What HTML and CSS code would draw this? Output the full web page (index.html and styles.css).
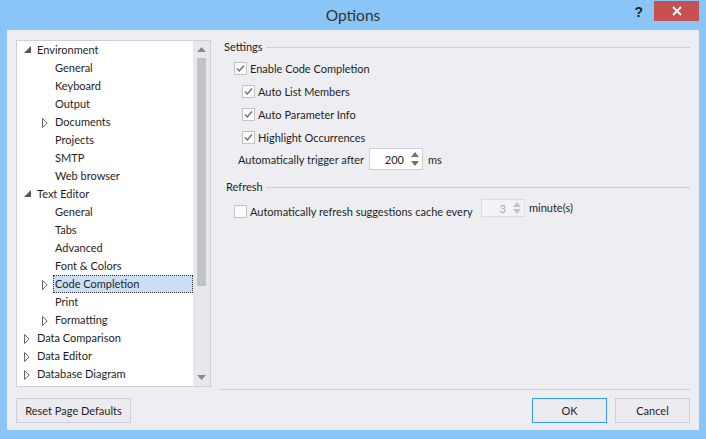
FILE: index.html
```html
<!DOCTYPE html>
<html>
<head>
<meta charset="utf-8">
<title>Options</title>
<link rel="stylesheet" href="styles.css">
</head>
<body>
<div class="window">
  <div class="titlebar">
    <div class="title">Options</div>
    <div class="caption-buttons">
      <div class="help">?</div>
      <div class="close">
        <svg width="10" height="10" viewBox="0 0 10 10"><path d="M1 1 L9 9 M9 1 L1 9" stroke="#fff" stroke-width="1.8" fill="none"/></svg>
      </div>
    </div>
  </div>
  <div class="client">
    <div class="main">
      <div class="tree">
        <ul class="items">
          <li class="row l0"><span class="tg"><svg class="exp" width="7" height="7" viewBox="0 0 7 7"><polygon points="7,0 7,7 0,7" fill="#595959"/></svg></span><span class="lbl">Environment</span></li>
          <li class="row l1"><span class="tg"></span><span class="lbl">General</span></li>
          <li class="row l1"><span class="tg"></span><span class="lbl">Keyboard</span></li>
          <li class="row l1"><span class="tg"></span><span class="lbl">Output</span></li>
          <li class="row l1"><span class="tg"><svg class="col" width="6" height="10" viewBox="0 0 6 10"><polygon points="0.5,0.5 5.2,5 0.5,9.5" fill="#fff" stroke="#666" stroke-width="1"/></svg></span><span class="lbl">Documents</span></li>
          <li class="row l1"><span class="tg"></span><span class="lbl">Projects</span></li>
          <li class="row l1"><span class="tg"></span><span class="lbl">SMTP</span></li>
          <li class="row l1"><span class="tg"></span><span class="lbl">Web browser</span></li>
          <li class="row l0"><span class="tg"><svg class="exp" width="7" height="7" viewBox="0 0 7 7"><polygon points="7,0 7,7 0,7" fill="#595959"/></svg></span><span class="lbl">Text Editor</span></li>
          <li class="row l1"><span class="tg"></span><span class="lbl">General</span></li>
          <li class="row l1"><span class="tg"></span><span class="lbl">Tabs</span></li>
          <li class="row l1"><span class="tg"></span><span class="lbl">Advanced</span></li>
          <li class="row l1"><span class="tg"></span><span class="lbl">Font &amp; Colors</span></li>
          <li class="row l1"><span class="tg"><svg class="col" width="6" height="10" viewBox="0 0 6 10"><polygon points="0.5,0.5 5.2,5 0.5,9.5" fill="#fff" stroke="#666" stroke-width="1"/></svg></span><span class="lbl sel">Code Completion</span></li>
          <li class="row l1"><span class="tg"></span><span class="lbl">Print</span></li>
          <li class="row l1"><span class="tg"><svg class="col" width="6" height="10" viewBox="0 0 6 10"><polygon points="0.5,0.5 5.2,5 0.5,9.5" fill="#fff" stroke="#666" stroke-width="1"/></svg></span><span class="lbl">Formatting</span></li>
          <li class="row l0"><span class="tg"><svg class="col" width="6" height="10" viewBox="0 0 6 10"><polygon points="0.5,0.5 5.2,5 0.5,9.5" fill="#fff" stroke="#666" stroke-width="1"/></svg></span><span class="lbl">Data Comparison</span></li>
          <li class="row l0"><span class="tg"><svg class="col" width="6" height="10" viewBox="0 0 6 10"><polygon points="0.5,0.5 5.2,5 0.5,9.5" fill="#fff" stroke="#666" stroke-width="1"/></svg></span><span class="lbl">Data Editor</span></li>
          <li class="row l0"><span class="tg"><svg class="col" width="6" height="10" viewBox="0 0 6 10"><polygon points="0.5,0.5 5.2,5 0.5,9.5" fill="#fff" stroke="#666" stroke-width="1"/></svg></span><span class="lbl">Database Diagram</span></li>
          <li class="row l0"><span class="tg"><svg class="col" width="6" height="10" viewBox="0 0 6 10"><polygon points="0.5,0.5 5.2,5 0.5,9.5" fill="#fff" stroke="#666" stroke-width="1"/></svg></span><span class="lbl">Debugger</span></li>
        </ul>
        <div class="scrollbar">
          <div class="sb-btn"><svg width="9" height="5" viewBox="0 0 9 5"><polygon points="4.5,0 9,5 0,5" fill="#868999"/></svg></div>
          <div class="sb-track"><div class="thumb"></div></div>
          <div class="sb-btn"><svg width="9" height="5" viewBox="0 0 9 5"><polygon points="0,0 9,0 4.5,5" fill="#868999"/></svg></div>
        </div>
      </div>
      <div class="panel">
        <div class="group-head"><span class="gh-label">Settings</span><span class="gh-rule"></span></div>
        <div class="opt l1 first">
          <span class="cb"><svg width="11" height="11" viewBox="0 0 11 11"><path d="M2 5.5 L4.3 8 L9 2.5" stroke="#707070" stroke-width="1.4" fill="none"/></svg></span><span class="txt">Enable Code Completion</span>
        </div>
        <div class="opt l2">
          <span class="cb"><svg width="11" height="11" viewBox="0 0 11 11"><path d="M2 5.5 L4.3 8 L9 2.5" stroke="#707070" stroke-width="1.4" fill="none"/></svg></span><span class="txt">Auto List Members</span>
        </div>
        <div class="opt l2">
          <span class="cb"><svg width="11" height="11" viewBox="0 0 11 11"><path d="M2 5.5 L4.3 8 L9 2.5" stroke="#707070" stroke-width="1.4" fill="none"/></svg></span><span class="txt">Auto Parameter Info</span>
        </div>
        <div class="opt l2">
          <span class="cb"><svg width="11" height="11" viewBox="0 0 11 11"><path d="M2 5.5 L4.3 8 L9 2.5" stroke="#707070" stroke-width="1.4" fill="none"/></svg></span><span class="txt">Highlight Occurrences</span>
        </div>
        <div class="trigger">
          <span class="trigger-label">Automatically trigger after</span>
          <div class="spin">
            <span class="spin-val">200</span>
            <span class="spin-arrows">
              <svg width="8" height="5" viewBox="0 0 8 5"><polygon points="4,0 8,5 0,5" fill="#717171"/></svg>
              <svg width="8" height="5" viewBox="0 0 8 5"><polygon points="0,0 8,0 4,5" fill="#717171"/></svg>
            </span>
          </div>
          <span class="unit">ms</span>
        </div>
        <div class="group-head refresh-head"><span class="gh-label">Refresh</span><span class="gh-rule"></span></div>
        <div class="opt l1 refresh-row">
          <span class="cb"></span><span class="txt refresh-label">Automatically refresh suggestions cache every</span>
          <div class="spin disabled">
            <span class="spin-val">3</span>
            <span class="spin-arrows">
              <svg width="8" height="5" viewBox="0 0 8 5"><polygon points="4,0 8,5 0,5" fill="#c4c4c8"/></svg>
              <svg width="8" height="5" viewBox="0 0 8 5"><polygon points="0,0 8,0 4,5" fill="#c4c4c8"/></svg>
            </span>
          </div>
          <span class="unit minutes">minute(s)</span>
        </div>
      </div>
    </div>
    <div class="buttons">
      <div class="btn reset">Reset Page Defaults</div>
      <div class="btn ok">OK</div>
      <div class="btn cancel">Cancel</div>
    </div>
  </div>
</div>
</body>
</html>
```
FILE: styles.css
```css
* { box-sizing: border-box; }
html, body { margin: 0; padding: 0; }
body {
  width: 706px;
  height: 439px;
  overflow: hidden;
  background: #89c5f7;
  font-family: Lato, "Noto Sans", sans-serif;
  font-size: 11px;
  color: #1e1e1e;
}
.window {
  width: 706px;
  height: 439px;
  display: flex;
  flex-direction: column;
}
.titlebar {
  height: 30px;
  display: grid;
  grid-template-columns: 1fr auto 1fr;
}
.title {
  grid-column: 2;
  font-family: Lato, "Noto Sans", sans-serif;
  font-size: 15.5px;
  line-height: 30px;
  color: #333;
}
.caption-buttons {
  grid-column: 3;
  display: flex;
  justify-content: flex-end;
  align-items: flex-start;
  padding-right: 7px;
}
.help {
  font-family: "Liberation Sans", sans-serif;
  font-weight: bold;
  font-size: 14px;
  line-height: 14px;
  margin-top: 5px;
  margin-right: 11px;
  color: #222;
}
.close {
  width: 45px;
  height: 20px;
  margin-top: 1px;
  background: #c75050;
  display: flex;
  align-items: center;
  justify-content: center;
}
.client {
  margin: 0 7px;
  height: 400px;
  background: #eeeef2;
  padding: 10px 9px 0;
  display: flex;
  flex-direction: column;
}
.main {
  display: flex;
  gap: 8px;
  height: 350px;
}
.tree {
  width: 195px;
  height: 347px;
  border: 1px solid #cccedb;
  background: #fff;
  display: flex;
}
.items {
  flex: 1;
  list-style: none;
  margin: 0;
  padding: 0;
  overflow: hidden;
}
.row {
  display: flex;
  align-items: center;
  height: 18px;
  line-height: 18px;
  white-space: nowrap;
}
.row.l0 { padding-left: 7px; }
.row.l1 { padding-left: 25px; }
.tg {
  width: 13px;
  height: 18px;
  flex: none;
}
.tg .exp { display: block; margin-top: 5px; }
.tg .col { display: block; margin-top: 5px; }
.lbl { flex: 1; height: 18px; }
.lbl.sel {
  margin-left: -2px;
  padding-left: 1px;
  border: 1px dotted #333;
  background: #cce0f5;
  line-height: 16px;
}
.scrollbar {
  width: 17px;
  flex: none;
  background: #e8e8ec;
  display: flex;
  flex-direction: column;
}
.sb-btn {
  height: 17px;
  flex: none;
  display: flex;
  align-items: center;
  justify-content: center;
}
.sb-track { flex: 1; }
.thumb {
  width: 9px;
  height: 228px;
  margin: 0 auto;
  background: #c2c3c9;
}
.panel {
  flex: 1;
  height: 350px;
  border-bottom: 1px solid #cccedb;
}
.group-head {
  display: flex;
  align-items: center;
  height: 14px;
  padding-left: 5px;
}
.gh-label { width: 42px; line-height: 14px; flex: none; }
.gh-rule { flex: 1; height: 1px; background: #cccedb; }
.refresh-head { margin-top: 10px; padding-left: 7px; }
.refresh-head .gh-label { width: 40px; }
.opt {
  display: flex;
  align-items: center;
  height: 23px;
  white-space: nowrap;
}
.opt.l1 { padding-left: 15px; }
.opt.l2 { padding-left: 23px; }
.opt.first { margin-top: 3px; }
.cb {
  width: 13px;
  height: 13px;
  flex: none;
  border: 1px solid #c3c3c8;
  background: #fbfbfb;
  margin-right: 3px;
  display: flex;
  align-items: center;
  justify-content: center;
}
.trigger {
  display: flex;
  align-items: center;
  height: 22px;
  margin-top: -1px;
  padding-left: 19px;
  white-space: nowrap;
}
.trigger-label { width: 131px; flex: none; }
.spin {
  width: 54px;
  height: 22px;
  flex: none;
  border: 1px solid #cccedb;
  background: #fff;
  display: flex;
  align-items: center;
}
.spin-val {
  flex: 1;
  text-align: right;
  padding-right: 4px;
}
.spin-arrows {
  width: 14px;
  display: flex;
  flex-direction: column;
  align-items: center;
  gap: 4px;
}
.spin-arrows svg { display: block; }
.unit { margin-left: 5px; }
.refresh-row { margin-top: 6px; }
.refresh-label { width: 231px; flex: none; }
.spin.disabled {
  width: 44px;
  height: 18px;
  align-self: flex-start;
  margin-top: -1px;
  border-color: #dcdce2;
  background: #f3f3f6;
  color: #a6a6ab;
}
.spin.disabled .spin-arrows { gap: 2px; }
.minutes {
  align-self: flex-start;
  margin-top: -1px;
  line-height: 17px;
  margin-left: 4px;
}
.buttons {
  display: flex;
  gap: 8px;
  margin-top: 8px;
}
.btn {
  height: 25px;
  border: 1px solid #cccedb;
  background: #ececf0;
  display: flex;
  align-items: center;
  justify-content: center;
}
.reset { width: 115px; margin-right: auto; }
.ok { width: 75px; border-color: #3399ff; }
.cancel { width: 75px; }
```
